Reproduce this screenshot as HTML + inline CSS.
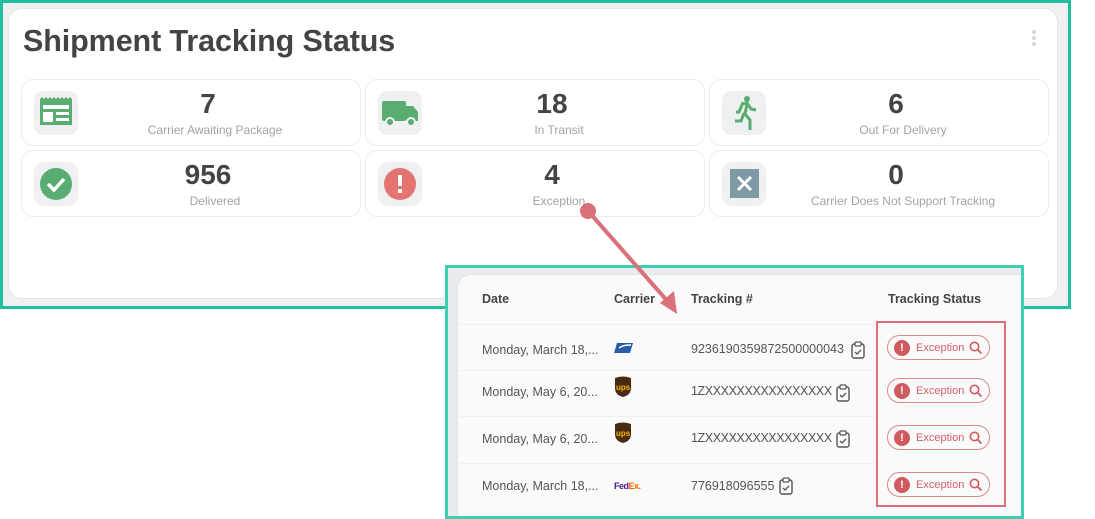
<!DOCTYPE html>
<html><head><style>
*{margin:0;padding:0;box-sizing:border-box}
html,body{width:1095px;height:519px;overflow:hidden}
body{background:#fff;position:relative;font-family:"Liberation Sans",Roboto,sans-serif}
.outer{position:absolute;left:0;top:0;width:1071px;height:309px;border:3px solid #1fbf9f;background:#eef0f2}
.card{position:absolute;left:8px;top:8px;width:1050px;height:291px;background:#fff;border:1px solid #e3e5e7;border-radius:14px}
h1{position:absolute;left:23px;top:24px;font-size:30.5px;font-weight:bold;color:#444;letter-spacing:-0.1px}
.dots{position:absolute;left:1032px;top:30px;width:4px}
.dots i{display:block;width:4px;height:4px;border-radius:2px;background:#d5d5d5;margin-bottom:2px}
.tile{position:absolute;width:340px;height:67px;background:#fff;border:1px solid #ececec;border-radius:12px}
.ib{position:absolute;left:12px;top:11px;width:44px;height:44px;background:#eff0f1;border-radius:10px}
.ib svg{position:absolute;left:0;top:0}
.num{position:absolute;left:60px;right:0;top:8px;text-align:center;font-size:28px;font-weight:bold;color:#444;padding-right:26px}
.lbl{position:absolute;left:60px;right:0;top:43px;text-align:center;font-size:12px;color:#a3a3a3;padding-right:12px}
.inset{position:absolute;left:445px;top:265px;width:579px;height:254px;border:3px solid #3ecfb0;background:#e9ecef;overflow:hidden}
.ip{position:absolute;left:9px;top:6px;width:580px;height:260px;background:#fafafa;border-radius:14px 0 0 0;border:1px solid #e1e3e5}
.t{position:absolute;font-size:12.5px;color:#555}
.h{position:absolute;font-size:12.5px;color:#444;font-weight:bold;top:292px}
.sep{position:absolute;left:457px;width:420px;height:1px;background:#f0f0f0}
.redbox{position:absolute;left:876px;top:321px;width:130px;height:186px;border:2.5px solid #d9707a}
.pill{position:absolute;left:887px;width:103px;height:25px;border:1px solid #dc8a8e;border-radius:13px;font-size:11px;color:#d0606a}
.pill b{position:absolute;left:6px;top:4px;width:16px;height:16px;border-radius:8px;background:#cf5a5f;color:#fff;font-size:11px;text-align:center;line-height:16px}
.pill span{position:absolute;left:28px;top:6px}
.pill svg{position:absolute;left:81px;top:5px}
.clip{position:absolute}
.x{letter-spacing:-0.4px}
</style></head><body>
<div class="outer"></div>
<div class="card"></div>
<h1>Shipment Tracking Status</h1>
<div class="dots"><i></i><i></i><i></i></div>

<div class="tile" style="left:21px;top:79px"><div class="ib"><svg width="44" height="44"><path d="M6 8 l2-2 2 2 2-2 2 2 2-2 2 2 2-2 2 2 2-2 2 2 2-2 2 2 2-2 2 2 2-2 2 2 V34 H6Z" fill="#59ad71"/><rect x="9" y="14" width="26" height="4" fill="#fff"/><rect x="9" y="21" width="10" height="10" fill="#fff"/><rect x="22" y="21" width="13" height="3" fill="#fff"/><rect x="22" y="27" width="13" height="3" fill="#fff"/></svg></div><div class="num">7</div><div class="lbl">Carrier Awaiting Package</div></div>
<div class="tile" style="left:365px;top:79px"><div class="ib"><svg width="44" height="44"><rect x="4" y="10" width="24" height="20" rx="2" fill="#59ad71"/><path d="M28 15h7l5 6v9h-12z" fill="#59ad71"/><circle cx="12" cy="31" r="4" fill="#59ad71" stroke="#eff0f1" stroke-width="2"/><circle cx="33" cy="31" r="4" fill="#59ad71" stroke="#eff0f1" stroke-width="2"/></svg></div><div class="num">18</div><div class="lbl">In Transit</div></div>
<div class="tile" style="left:709px;top:79px"><div class="ib"><svg width="44" height="44"><circle cx="25" cy="8" r="3" fill="#59ad71"/><path d="M19 13l6-1 4 6 5 1 M20 14l-3 7h-3 M25 13l-2 10 5 6v10 M22 22l-3 8h-6" stroke="#59ad71" stroke-width="3" fill="none"/></svg></div><div class="num">6</div><div class="lbl">Out For Delivery</div></div>
<div class="tile" style="left:21px;top:150px"><div class="ib"><svg width="44" height="44"><circle cx="22" cy="22" r="16" fill="#59ad71"/><path d="M14 22l6 6 10-11" stroke="#fff" stroke-width="3.5" fill="none"/></svg></div><div class="num">956</div><div class="lbl">Delivered</div></div>
<div class="tile" style="left:365px;top:150px"><div class="ib"><svg width="44" height="44"><circle cx="22" cy="22" r="16" fill="#e37472"/><rect x="20" y="13" width="4" height="11" fill="#fff"/><rect x="20" y="27" width="4" height="4" fill="#fff"/></svg></div><div class="num">4</div><div class="lbl">Exception</div></div>
<div class="tile" style="left:709px;top:150px"><div class="ib"><svg width="44" height="44"><rect x="8" y="7" width="29" height="29" fill="#7f9aa5"/><path d="M16 15l13 13M29 15l-13 13" stroke="#fff" stroke-width="3"/></svg></div><div class="num">0</div><div class="lbl">Carrier Does Not Support Tracking</div></div>

<div class="inset"><div class="ip"></div></div>
<div class="h" style="left:482px">Date</div>
<div class="h" style="left:614px">Carrier</div>
<div class="h" style="left:691px">Tracking #</div>
<div class="h" style="left:888px">Tracking Status</div>
<div class="sep" style="top:324px"></div><div class="sep" style="top:370px"></div><div class="sep" style="top:416px"></div><div class="sep" style="top:463px"></div>

<div class="t" style="left:482px;top:343px">Monday, March 18,...</div>
<div class="t" style="left:482px;top:385px">Monday, May 6, 20...</div>
<div class="t" style="left:482px;top:432px">Monday, May 6, 20...</div>
<div class="t" style="left:482px;top:479px">Monday, March 18,...</div>

<svg class="clip" style="left:614px;top:342px" width="20" height="12"><path d="M3 1h16l-3 10H0z" fill="#2a5caa"/><path d="M5 6c4-3 8-3 12-3" stroke="#fff" stroke-width="1.5" fill="none"/></svg>
<svg class="clip" style="left:614px;top:376px" width="18" height="22"><path d="M1 2q8-3 16 0v10q0 7-8 9q-8-2-8-9z" fill="#4a2a12"/><text x="2" y="14" font-size="8" font-weight="bold" fill="#f5b800" font-family="Liberation Sans">ups</text></svg>
<svg class="clip" style="left:614px;top:422px" width="18" height="22"><path d="M1 2q8-3 16 0v10q0 7-8 9q-8-2-8-9z" fill="#4a2a12"/><text x="2" y="14" font-size="8" font-weight="bold" fill="#f5b800" font-family="Liberation Sans">ups</text></svg>
<div class="clip" style="left:614px;top:481px;font-size:9px;font-weight:bold;letter-spacing:-0.5px"><span style="color:#4d148c">Fed</span><span style="color:#ff6600">Ex.</span></div>

<div class="t" style="left:691px;top:342px">9236190359872500000043</div>
<div class="t x" style="left:691px;top:384px">1ZXXXXXXXXXXXXXXXX</div>
<div class="t x" style="left:691px;top:431px">1ZXXXXXXXXXXXXXXXX</div>
<div class="t" style="left:691px;top:479px">776918096555</div>
<svg class="clip" style="left:850px;top:341px" width="16" height="18"><rect x="2" y="3" width="12" height="14" rx="2" fill="none" stroke="#555" stroke-width="1.4"/><rect x="5" y="1" width="6" height="4" rx="1" fill="#fff" stroke="#555" stroke-width="1.2"/><path d="M5 11l2 2 4-4" stroke="#555" stroke-width="1.3" fill="none"/></svg>
<svg class="clip" style="left:835px;top:384px" width="16" height="18"><rect x="2" y="3" width="12" height="14" rx="2" fill="none" stroke="#555" stroke-width="1.4"/><rect x="5" y="1" width="6" height="4" rx="1" fill="#fff" stroke="#555" stroke-width="1.2"/><path d="M5 11l2 2 4-4" stroke="#555" stroke-width="1.3" fill="none"/></svg>
<svg class="clip" style="left:835px;top:430px" width="16" height="18"><rect x="2" y="3" width="12" height="14" rx="2" fill="none" stroke="#555" stroke-width="1.4"/><rect x="5" y="1" width="6" height="4" rx="1" fill="#fff" stroke="#555" stroke-width="1.2"/><path d="M5 11l2 2 4-4" stroke="#555" stroke-width="1.3" fill="none"/></svg>
<svg class="clip" style="left:778px;top:477px" width="16" height="18"><rect x="2" y="3" width="12" height="14" rx="2" fill="none" stroke="#555" stroke-width="1.4"/><rect x="5" y="1" width="6" height="4" rx="1" fill="#fff" stroke="#555" stroke-width="1.2"/><path d="M5 11l2 2 4-4" stroke="#555" stroke-width="1.3" fill="none"/></svg>

<div class="redbox"></div>
<div class="pill" style="top:335px"><b>!</b><span>Exception</span><svg width="14" height="14"><circle cx="5.5" cy="5.5" r="4.2" fill="none" stroke="#cf5a5f" stroke-width="1.6"/><path d="M8.5 8.5l4 4" stroke="#cf5a5f" stroke-width="1.8"/></svg></div>
<div class="pill" style="top:378px"><b>!</b><span>Exception</span><svg width="14" height="14"><circle cx="5.5" cy="5.5" r="4.2" fill="none" stroke="#cf5a5f" stroke-width="1.6"/><path d="M8.5 8.5l4 4" stroke="#cf5a5f" stroke-width="1.8"/></svg></div>
<div class="pill" style="top:425px"><b>!</b><span>Exception</span><svg width="14" height="14"><circle cx="5.5" cy="5.5" r="4.2" fill="none" stroke="#cf5a5f" stroke-width="1.6"/><path d="M8.5 8.5l4 4" stroke="#cf5a5f" stroke-width="1.8"/></svg></div>
<div class="pill" style="top:472px"><b>!</b><span>Exception</span><svg width="14" height="14"><circle cx="5.5" cy="5.5" r="4.2" fill="none" stroke="#cf5a5f" stroke-width="1.6"/><path d="M8.5 8.5l4 4" stroke="#cf5a5f" stroke-width="1.8"/></svg></div>

<svg style="position:absolute;left:0;top:0" width="1095" height="519"><circle cx="588" cy="211" r="8" fill="#d9707a"/><line x1="588" y1="211" x2="670" y2="304" stroke="#d9707a" stroke-width="4"/><path d="M677 314 L660 303 L674 291 Z" fill="#d9707a"/></svg>
</body></html>
